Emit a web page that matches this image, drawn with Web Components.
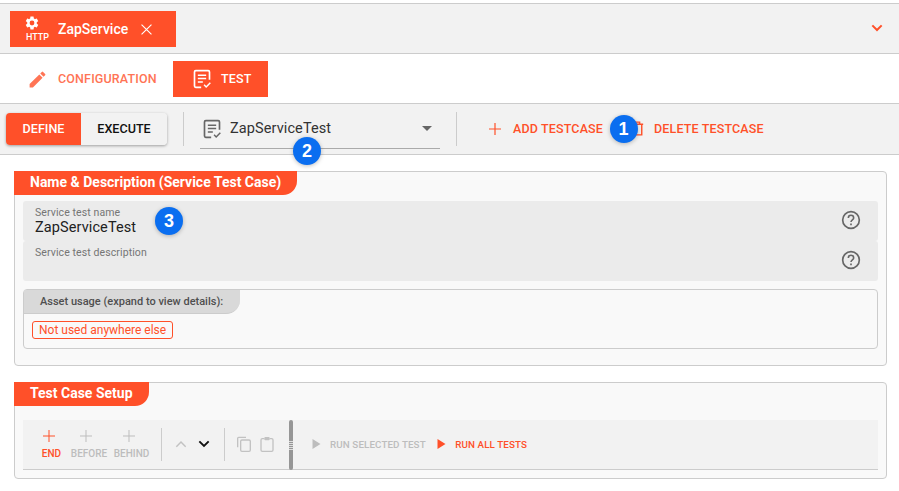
<!DOCTYPE html>
<html><head><meta charset="utf-8"><style>
html,body{margin:0;padding:0;background:#fff;font-family:Roboto,"Liberation Sans",sans-serif;width:899px;height:491px;overflow:hidden}
</style></head><body>
<app-root></app-root>
<script>
const O='#ff5029';
const I={
gear:s=>`<svg width="${s}" height="${s}" viewBox="0 0 24 24" fill="currentColor"><path d="M19.14 12.94c.04-.3.06-.61.06-.94 0-.32-.02-.64-.07-.94l2.03-1.58a.49.49 0 0 0 .12-.61l-1.92-3.32a.488.488 0 0 0-.59-.22l-2.39.96c-.5-.38-1.03-.7-1.62-.94l-.36-2.54a.484.484 0 0 0-.48-.41h-3.84c-.24 0-.43.17-.47.41l-.36 2.54c-.59.24-1.13.57-1.62.94l-2.39-.96c-.22-.08-.47 0-.59.22L2.74 8.87c-.12.21-.08.47.12.61l2.03 1.58c-.05.3-.09.63-.09.94s.02.64.07.94l-2.03 1.58a.49.49 0 0 0-.12.61l1.92 3.32c.12.22.37.29.59.22l2.39-.96c.5.38 1.03.7 1.62.94l.36 2.54c.05.24.24.41.48.41h3.84c.24 0 .44-.17.47-.41l.36-2.54c.59-.24 1.13-.56 1.62-.94l2.39.96c.22.08.47 0 .59-.22l1.92-3.32c.12-.22.07-.47-.12-.61l-2.01-1.58zM12 15.6A3.6 3.6 0 1 1 12 8.4a3.6 3.6 0 0 1 0 7.2z"/></svg>`,
close:s=>`<svg width="${s}" height="${s}" viewBox="0 0 24 24" fill="none" stroke="currentColor" stroke-width="1.6"><path d="M5 5l14 14M19 5L5 19"/></svg>`,
pencil:s=>`<svg width="${s}" height="${s}" viewBox="0 0 24 24" fill="currentColor"><path d="M3 17.25V21h3.75L17.81 9.94l-3.75-3.75L3 17.25zM20.71 7.04a1 1 0 0 0 0-1.41l-2.34-2.34a1 1 0 0 0-1.41 0l-1.83 1.83 3.75 3.75 1.83-1.83z"/></svg>`,
test:s=>`<svg width="${s}" height="${s}" viewBox="0 0 24 24" fill="none" stroke="currentColor"><path d="M11 22H4.500A1.500 1.500 0 0 1 3 20.500v-17A1.500 1.500 0 0 1 4.500 2h15A1.500 1.500 0 0 1 21 3.500V13" stroke-width="2"/><path d="M7 7.500h10M7 11.500h10M7 15.500h6" stroke-width="1.800"/><path d="M14.500 19l2.500 2.500 5-5" stroke-width="1.800"/></svg>`,
plus:(s,w=1.7)=>`<svg width="${s}" height="${s}" viewBox="0 0 24 24" fill="none" stroke="currentColor" stroke-width="${w}"><path d="M12 3v18M3 12h18"/></svg>`,
trash:s=>`<svg width="${s}" height="${s}" viewBox="0 0 24 24" fill="none" stroke="currentColor" stroke-width="2"><path d="M4 6h16M9 6V3h6v3M6 6v15h12V6"/></svg>`,
help:s=>`<svg width="${s}" height="${s}" viewBox="0 0 24 24" fill="none" stroke="currentColor" stroke-width="2"><circle cx="12" cy="12" r="10"/><path d="M8.800 9.500a3.200 3.200 0 0 1 6.400 0c0 2.300-3.200 2.500-3.200 5" stroke-width="1.900"/><path d="M12 16.200v2" stroke-width="2"/></svg>`,
up:s=>`<svg width="${s}" height="${s}" viewBox="0 0 24 24" fill="none" stroke="currentColor" stroke-width="2.200"><path d="M5 16l7-7 7 7"/></svg>`,
down:(s,w=3)=>`<svg width="${s}" height="${s}" viewBox="0 0 24 24" fill="none" stroke="currentColor" stroke-width="${w}"><path d="M5 8l7 7 7-7"/></svg>`,
copy:s=>`<svg width="${s}" height="${s}" viewBox="0 0 24 24" fill="none" stroke="currentColor" stroke-width="2"><path d="M15 2H4a1.500 1.500 0 0 0-1.500 1.500V17"/><rect x="7" y="6" width="14.500" height="17" rx="2"/></svg>`,
paste:s=>`<svg width="${s}" height="${s}" viewBox="0 0 24 24" fill="none" stroke="currentColor" stroke-width="2"><path d="M8 4H5a2 2 0 0 0-2 2v15a2 2 0 0 0 2 2h14a2 2 0 0 0 2-2V6a2 2 0 0 0-2-2h-3"/><rect x="8" y="1.500" width="8" height="5" rx="1.500" fill="currentColor" stroke="none"/></svg>`,
play:s=>`<svg width="${s}" height="${s}" viewBox="0 0 24 24" fill="currentColor"><path d="M5 2v20l16-10z"/></svg>`
};
function def(name,css,html){
  customElements.define(name,class extends HTMLElement{
    constructor(){super();const r=this.attachShadow({mode:'open'});
      const h=typeof html==='function'?html(this):html;
      r.innerHTML=`<style>:host{display:block;box-sizing:border-box}*{box-sizing:border-box}${css}</style>${h}`;}
  });
}
def('tool-btn',`:host{display:flex;flex-direction:column;align-items:center;font-size:10px;font-weight:500;color:#bdbdbd;line-height:12px}
:host([on]){color:${O}}svg{display:block;margin:0 6px 4px 0}`,e=>`${I.plus(16,1.500)}<span>${e.getAttribute('label')}</span>`);
def('action-btn',`:host{display:flex;align-items:center;font-size:12.5px;font-weight:500;color:${O};letter-spacing:.15px;white-space:nowrap;padding-bottom:1px}`,`<slot></slot>`);
def('step-badge',`:host{position:absolute;width:28px;height:28px;border-radius:50%;background:#0a6ef0;color:#fff;font:700 18px/28px "Liberation Sans",Arial,sans-serif;text-align:center;box-shadow:0 1px 4px rgba(0,0,0,.25)}`,`<slot></slot>`);
def('panel-box',`:host{border:1px solid #ccc;border-radius:4px;background:#f9f9f9;margin:0 0 0 14px;width:873px}
.t{display:inline-block;height:24px;line-height:23px;margin:-1px 0 0 -1px;background:${O};color:#fff;font-size:14px;font-weight:700;padding:0 16px;border-bottom-right-radius:14px;vertical-align:top}
.b{padding:6px 8px 0 8px}`,e=>`<div class="t">${e.getAttribute('heading')}</div><div class="b"><slot></slot></div>`);
def('text-field',`:host{height:40px;background:#ebebeb;padding:5px 12px;display:flex;justify-content:space-between;border-radius:3px}
.l{font-size:10.5px;line-height:13px;color:#757575;letter-spacing:.1px}.v{font-size:14.500px;line-height:17px;color:#212121;margin-top:-.5px;letter-spacing:.1px}
.h{color:#666;margin:4px 5px 0 0;flex:none}svg{display:block}`,e=>`<div><div class="l">${e.getAttribute('label')}</div><div class="v">${e.getAttribute('value')||''}</div></div><div class="h">${I.help(20)}</div>`);
def('asset-box',`:host{height:60px;margin:8px 0 0;border:1px solid #ccc;border-radius:4px}
.h{width:216px;height:24px;background:#d9d9d9;border-bottom-right-radius:14px;color:#4f4f4f;font-size:11px;font-weight:500;line-height:23px;padding-left:16px;border-bottom:1px solid #ccc}
.c{display:inline-block;margin:7px 0 0 8px;height:18px;line-height:16px;border:1px solid ${O};border-radius:3px;color:${O};font-size:12px;padding:0 6px}`,`<div class="h">Asset usage (expand to view details):</div><div class="c">Not used anywhere else</div>`);
def('case-toolbar',`:host{height:50px;background:#f2f2f2;border-bottom:1.500px solid #ccc;display:flex;align-items:stretch;margin-top:8px}
.add{display:flex;padding:8px 0 0 0;margin-left:11px;height:40px}
.add tool-btn:nth-child(1){width:35px}
.add tool-btn:nth-child(2){width:36px;margin-left:2px}
.add tool-btn:nth-child(3){width:35px;margin-left:7px}
.sep{width:1px;height:33px;background:#ccc;margin-top:8px;flex:none}
.ud{display:flex;align-items:flex-start;padding-top:16px;gap:7px;margin:0 0 0 11px;width:51px}
.ud svg{display:block}
.cp{display:flex;gap:7px;padding-top:16px;color:#c2c2c2;margin-left:11px;width:53px}
.cp svg{display:block}
.grip{width:4px;height:50px;border-radius:2px;background:#969696;flex:none;position:relative}
.grip i{position:absolute;left:0;right:0;top:20px;height:10px;background:repeating-linear-gradient(#969696 0 1px,#ddd 1px 2px)}
.run{display:flex;align-items:center;height:20px;margin-top:14px;margin-left:16.500px}
.run svg{display:block}
.g,.o{font-size:9.800px;font-weight:500;white-space:nowrap;letter-spacing:.1px}
.g{color:#bdbdbd;margin:0 9.500px 0 8.500px}.o{color:${O};margin-left:8px}`,
`<div class="add"><tool-btn on label="END"></tool-btn><tool-btn label="BEFORE"></tool-btn><tool-btn label="BEHIND"></tool-btn></div>
<div class="sep" style="margin-left:12px"></div>
<div class="ud"><span style="color:#c2c2c2">${I.up(16)}</span><span style="color:#111">${I.down(16,2.800)}</span></div>
<div class="sep"></div>
<div class="cp">${I.copy(16)}${I.paste(16)}</div>
<div class="grip"><i></i></div>
<div class="run"><span style="color:#bdbdbd">${I.play(12)}</span><span class="g">RUN SELECTED TEST</span><span style="color:${O}">${I.play(12)}</span><span class="o">RUN ALL TESTS</span></div>`);
def('top-bar',`:host{height:51px;border-top:1px solid #ccc;border-bottom:1px solid #ccc;background:#f2f2f2;display:flex;align-items:flex-start;justify-content:space-between;padding:7px 14.500px 0 10px}
.tab{width:166px;height:36px;background:${O};color:#fff;display:flex;align-items:center;padding-left:15px}
.m{width:26px;display:flex;flex-direction:column;align-items:flex-start;font-size:9px;font-weight:500;line-height:10px}
.m svg{display:block;margin:-1px 0 1px -1px}.m span{margin-left:1px}
.n{font-size:14px;font-weight:500;margin-left:7px;padding-bottom:1px}
.x{margin-left:10px;display:flex}.x svg{display:block}
.c{color:${O};margin-top:9px}.c svg{display:block}`,
`<div class="tab"><div class="m">${I.gear(16)}<span>HTTP</span></div><span class="n">ZapService</span><span class="x">${I.close(17)}</span></div><div class="c">${I.down(16,3)}</div>`);
def('nav-tabs',`:host{height:50px;display:flex;align-items:flex-start;padding:7px 0 0 27px;border-bottom:1px solid #ccc}
.t{display:flex;align-items:center;height:36px;font-size:12.5px;font-weight:500;letter-spacing:.15px}
.t span{padding-bottom:1px}
.a{color:#ff7455;width:146px}.a svg{margin-right:10px;display:block}
.b{background:${O};color:#fff;width:95px;padding-left:19px}.b svg{margin-right:9px;display:block}`,
`<div class="t a">${I.pencil(21)}<span>CONFIGURATION</span></div><div class="t b">${I.test(20)}<span>TEST</span></div>`);
def('test-bar',`:host{height:51px;background:#f2f2f2;border-bottom:1px solid #ccc;display:flex;align-items:flex-start;padding:9px 0 0 6px}
.seg{display:flex;width:161px;height:32px;border-radius:4px;box-shadow:0 1px 3px rgba(0,0,0,.35);overflow:hidden;font-size:12.6px;font-weight:500;line-height:32px;text-align:center;flex:none}
.d{width:75px;background:${O};color:#fff}.e{flex:1;color:#111;background:#f2f2f2}
.sep{width:1px;height:34px;background:#ccc;margin:-1px 0 0 16px;flex:none}
.sel{width:240px;height:36px;margin:0 16px 0 16px;border-bottom:1px solid #aaa;display:flex;align-items:center;padding:0 6px 4px 2px;color:#333;font-size:14.500px;letter-spacing:.1px;flex:none}
.sel svg{display:block;margin-right:8px;color:#666}
.sel span{flex:1}.ar{flex:none;width:0;height:0;border:5px solid transparent;border-top:5px solid #666;border-bottom:0;margin-right:2px}
.acts{display:flex;align-items:center;height:32px;margin-left:30px}
.acts svg{display:block}
.p{margin-right:10px}.tr{margin:0 8px 0 26px}`,
`<div class="seg"><div class="d">DEFINE</div><div class="e">EXECUTE</div></div><div class="sep"></div>
<div class="sel">${I.test(20)}<span>ZapServiceTest</span><i class="ar"></i></div><div class="sep" style="margin-left:0"></div>
<div class="acts"><action-btn><span class="p">${I.plus(16,1.800)}</span>ADD TESTCASE</action-btn><action-btn><span class="tr">${I.trash(17)}</span>DELETE TESTCASE</action-btn></div>`);
def('app-root',`:host{width:899px;height:491px;position:relative;padding-top:3px}
.gap1,.gap2{height:16px}
panel-box.a{height:195px}panel-box.b{height:97px}
step-badge.one{left:609.5px;top:115px}step-badge.two{left:293px;top:137px}step-badge.three{left:155px;top:207px}`,
`<top-bar></top-bar><nav-tabs></nav-tabs><test-bar></test-bar><div class="gap1"></div>
<panel-box class="a" heading="Name &amp; Description (Service Test Case)">
<text-field label="Service test name" value="ZapServiceTest"></text-field>
<text-field label="Service test description"></text-field>
<asset-box></asset-box></panel-box><div class="gap2"></div>
<panel-box class="b" heading="Test Case Setup"><case-toolbar></case-toolbar></panel-box>
<step-badge class="one">1</step-badge><step-badge class="two">2</step-badge><step-badge class="three">3</step-badge>`);
</script>
</body></html>
